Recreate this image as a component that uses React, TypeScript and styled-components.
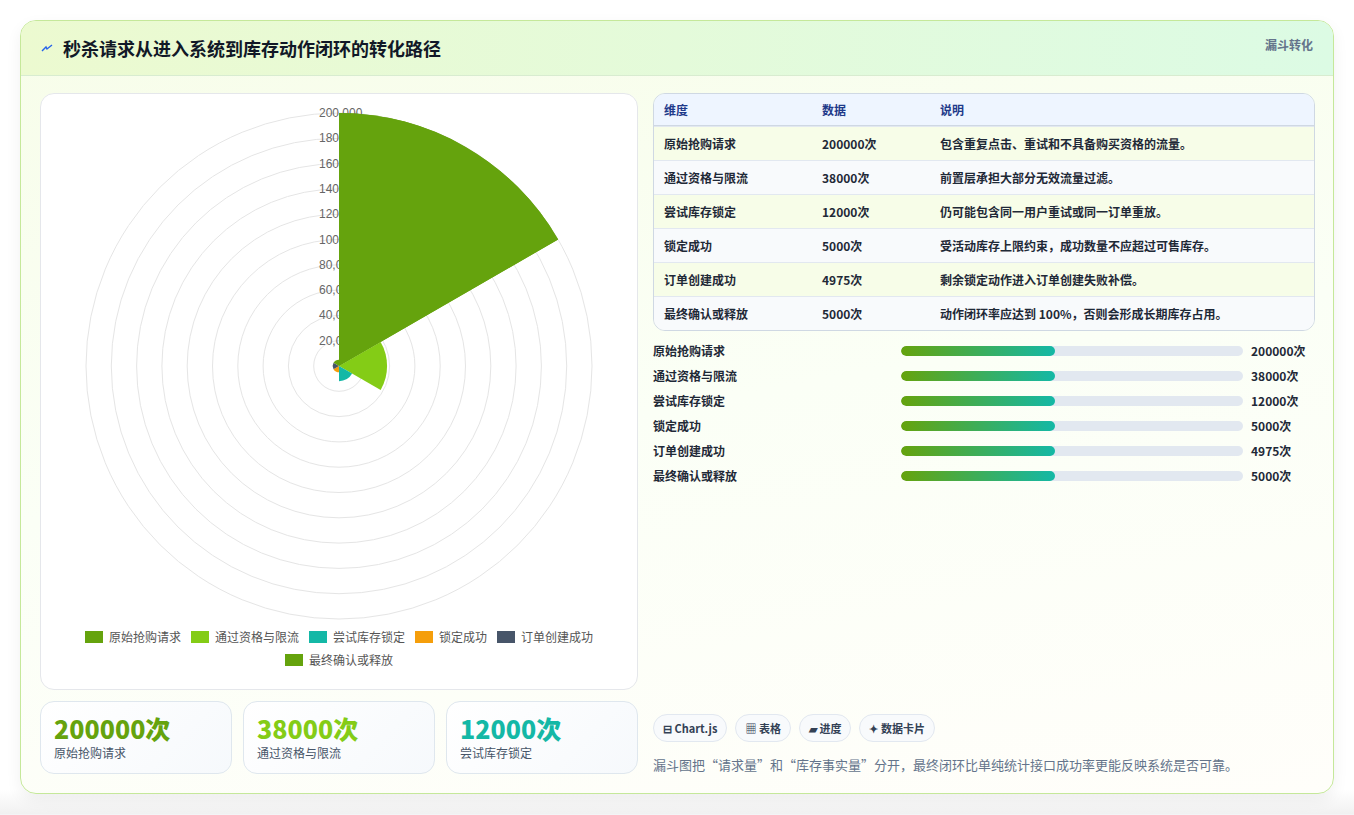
import styled, { createGlobalStyle } from 'styled-components'

const GlobalStyle = createGlobalStyle`
  body {
    margin: 0;
    background: #f3f4f6;
    font-family: "Noto Sans CJK SC", "Noto Sans", sans-serif;
  }
`

const rows = [
  { name: '原始抢购请求', value: 200000, note: '包含重复点击、重试和不具备购买资格的流量。', color: '#65a30d' },
  { name: '通过资格与限流', value: 38000, note: '前置层承担大部分无效流量过滤。', color: '#84cc16' },
  { name: '尝试库存锁定', value: 12000, note: '仍可能包含同一用户重试或同一订单重放。', color: '#14b8a6' },
  { name: '锁定成功', value: 5000, note: '受活动库存上限约束，成功数量不应超过可售库存。', color: '#f59e0b' },
  { name: '订单创建成功', value: 4975, note: '剩余锁定动作进入订单创建失败补偿。', color: '#475569' },
  { name: '最终确认或释放', value: 5000, note: '动作闭环率应达到 100%，否则会形成长期库存占用。', color: '#65a30d' },
]

const Page = styled.div`
  padding: 20px 20px 20px 20px;
  background: linear-gradient(#fff 0, #fff 97%, #f1f1f1 100%);
`
const Card = styled.div`
  border: 1px solid #c5e89a;
  border-radius: 16px;
  overflow: hidden;
  background: linear-gradient(170deg, #f7fde9 0%, #fbfff6 50%, #fffefa 100%);
  box-shadow: 0 6px 16px rgba(0, 0, 0, 0.06);
  height: 772px;
  display: flex;
  flex-direction: column;
`
const Header = styled.div`
  height: 54px;
  display: flex;
  justify-content: space-between;
  align-items: flex-start;
  padding: 0 20px;
  background: linear-gradient(90deg, #ecfad0, #dcfbe4);
  border-bottom: 1px solid #d8ecd0;
`
const Title = styled.h1`
  margin: 14px 0 0;
  font-size: 18px;
  font-weight: 700;
  color: #111827;
  display: flex;
  align-items: center;
  gap: 10px;
`
const Tag = styled.span`
  margin-top: 15px;
  font-size: 12px;
  font-weight: 700;
  color: #64748b;
`
const Body = styled.div`
  flex: 1;
  display: grid;
  grid-template-columns: 598px 1fr;
  gap: 15px;
  padding: 17px 18px 18px 19px;
`
const LeftCol = styled.div`
  display: flex;
  flex-direction: column;
  gap: 11px;
`
const ChartCard = styled.div`
  height: 597px;
  box-sizing: border-box;
  background: #fff;
  border: 1px solid #e5e7eb;
  border-radius: 14px;
  display: flex;
  flex-direction: column;
  align-items: center;
`
const Legend = styled.div`
  width: 560px;
  display: flex;
  flex-wrap: wrap;
  justify-content: center;
  gap: 6px 10px;
  margin-top: 4px;
`
const LegendItem = styled.span<{ $color: string }>`
  display: flex;
  align-items: center;
  gap: 6px;
  font-size: 12px;
  color: #555;
  &::before {
    content: '';
    width: 18px;
    height: 12px;
    background: ${({ $color }) => $color};
  }
`
const Stats = styled.div`
  display: grid;
  grid-template-columns: repeat(3, 1fr);
  gap: 11px;
`
const Stat = styled.div`
  height: 73px;
  box-sizing: border-box;
  padding: 10px 13px;
  border: 1px solid #dfe7ee;
  border-radius: 14px;
  background: linear-gradient(135deg, #fff, #f6f9fc);
`
const StatValue = styled.div<{ $color: string }>`
  font-size: 25px;
  font-weight: 800;
  line-height: 32px;
  color: ${({ $color }) => $color};
`
const StatLabel = styled.div`
  font-size: 12px;
  color: #475569;
`
const RightCol = styled.div`
  display: flex;
  flex-direction: column;
`
const Table = styled.table`
  width: 100%;
  border-collapse: separate;
  border-spacing: 0;
  border: 1px solid #cfd8e3;
  border-radius: 12px;
  overflow: hidden;
  font-size: 12px;
`
const Th = styled.th`
  text-align: left;
  font-weight: 700;
  color: #1e3a8a;
  background: #eef5ff;
  height: 31px;
  padding: 0 10px;
  border-bottom: 1px solid #cfd8e3;
`
const Td = styled.td<{ $alt: boolean }>`
  height: 33px;
  padding: 0 10px;
  color: #1f2937;
  font-weight: 600;
  background: ${({ $alt }) => ($alt ? '#f8fafc' : '#f7fde8')};
  border-top: 1px solid #e2e8f0;
`
const Bars = styled.div`
  margin-top: 7px;
  display: flex;
  flex-direction: column;
`
const BarRow = styled.div`
  height: 25px;
  display: grid;
  grid-template-columns: 240px 342px 1fr;
  gap: 8px;
  align-items: center;
  font-size: 12px;
  font-weight: 600;
  color: #1f2937;
`
const Track = styled.div`
  height: 10px;
  border-radius: 5px;
  background: #e2e8f0;
  overflow: hidden;
`
const Fill = styled.div`
  height: 100%;
  border-radius: 5px;
  background: linear-gradient(90deg, #65a30d, #14b8a6);
`
const Chips = styled.div`
  margin-top: auto;
  display: flex;
  gap: 8px;
`
const Chip = styled.span`
  height: 28px;
  box-sizing: border-box;
  padding: 0 9px;
  display: flex;
  align-items: center;
  gap: 3px;
  border: 1px solid #e2e8f0;
  border-radius: 14px;
  background: #f8fafc;
  font-size: 11px;
  font-weight: 700;
  color: #334155;
`
const Note = styled.p`
  margin: 13px 0 1px;
  font-size: 13px;
  color: #64748b;
`

const cx = 298
const cy = 272
const R = 253

const sector = (i: number, v: number) => {
  const r = (v / 200000) * R
  const a0 = ((i * 60 - 90) * Math.PI) / 180
  const a1 = (((i + 1) * 60 - 90) * Math.PI) / 180
  const x0 = cx + r * Math.cos(a0)
  const y0 = cy + r * Math.sin(a0)
  const x1 = cx + r * Math.cos(a1)
  const y1 = cy + r * Math.sin(a1)
  return `M${cx} ${cy} L${x0} ${y0} A${r} ${r} 0 0 1 ${x1} ${y1} Z`
}

const PolarChart = () => (
  <svg width="596" height="530" viewBox="0 0 596 530">
    {Array.from({ length: 10 }, (_, k) => (
      <circle key={k} cx={cx} cy={cy} r={((k + 1) * R) / 10} fill="none" stroke="#e5e5e5" />
    ))}
    {rows.map((r, i) => (
      <path key={r.name} d={sector(i, r.value)} fill={r.color} />
    ))}
    {Array.from({ length: 10 }, (_, k) => (
      <text key={k} x={cx - 20} y={cy - ((k + 1) * R) / 10 + 4} fontSize="12" fill="#666"
        fontFamily="Liberation Sans, sans-serif">
        {((k + 1) * 20000).toLocaleString('en-US')}
      </text>
    ))}
    <path d={sector(0, 200000)} fill="#65a30d" />
  </svg>
)

export default function App() {
  return (
    <Page>
      <GlobalStyle />
      <Card>
        <Header>
          <Title>
            <svg width="12" height="10" viewBox="0 0 12 10">
              <path d="M1 8 L5 4 L6 6 L11 2" stroke="#2563eb" strokeWidth="1.4" fill="none" />
            </svg>
            秒杀请求从进入系统到库存动作闭环的转化路径
          </Title>
          <Tag>漏斗转化</Tag>
        </Header>
        <Body>
          <LeftCol>
            <ChartCard>
              <PolarChart />
              <Legend>
                {rows.map(r => (
                  <LegendItem key={r.name} $color={r.color}>{r.name}</LegendItem>
                ))}
              </Legend>
            </ChartCard>
            <Stats>
              {rows.slice(0, 3).map(r => (
                <Stat key={r.name}>
                  <StatValue $color={r.color}>{r.value}次</StatValue>
                  <StatLabel>{r.name}</StatLabel>
                </Stat>
              ))}
            </Stats>
          </LeftCol>
          <RightCol>
            <Table>
              <thead>
                <tr>
                  <Th style={{ width: 138 }}>维度</Th>
                  <Th style={{ width: 98 }}>数据</Th>
                  <Th>说明</Th>
                </tr>
              </thead>
              <tbody>
                {rows.map((r, i) => (
                  <tr key={r.name}>
                    <Td $alt={i % 2 === 1}>{r.name}</Td>
                    <Td $alt={i % 2 === 1}>{r.value}次</Td>
                    <Td $alt={i % 2 === 1}>{r.note}</Td>
                  </tr>
                ))}
              </tbody>
            </Table>
            <Bars>
              {rows.map(r => (
                <BarRow key={r.name}>
                  <span>{r.name}</span>
                  <Track>
                    <Fill style={{ width: '45%' }} />
                  </Track>
                  <span>{r.value}次</span>
                </BarRow>
              ))}
            </Bars>
            <Chips>
              <Chip>⊟ Chart.js</Chip>
              <Chip>▦ 表格</Chip>
              <Chip>▰ 进度</Chip>
              <Chip>✦ 数据卡片</Chip>
            </Chips>
            <Note>漏斗图把“请求量”和“库存事实量”分开，最终闭环比单纯统计接口成功率更能反映系统是否可靠。</Note>
          </RightCol>
        </Body>
      </Card>
    </Page>
  )
}
